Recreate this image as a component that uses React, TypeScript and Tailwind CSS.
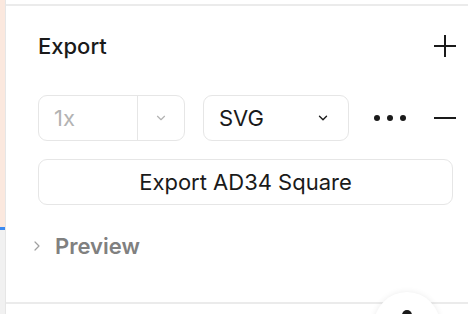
import { ChevronDown, ChevronRight } from 'lucide-react';

function PlusIcon() {
  return (
    <svg width="22" height="22" viewBox="0 0 22 22" fill="none" stroke="#1a1a1a" strokeWidth="2">
      <path d="M11 0V22M0 11H22" />
    </svg>
  );
}

function MinusIcon() {
  return (
    <svg width="22" height="22" viewBox="0 0 22 22" fill="none" stroke="#1a1a1a" strokeWidth="2">
      <path d="M0 11H22" />
    </svg>
  );
}

export default function App() {
  return (
    <div className="relative flex h-[314px] w-[468px] overflow-hidden bg-white font-['Inter',sans-serif] text-[#1a1a1a]">
      {/* left canvas edge */}
      <div className="flex w-[5px] shrink-0 flex-col">
        <div className="h-[227px] bg-[#fbe8de]" />
        <div className="h-[3px] bg-[#3d8af0]" />
        <div className="flex-1 bg-[#f1f1f1]" />
      </div>

      <div className="flex min-w-0 flex-1 flex-col border-l border-[#e6e6e6] pt-[4px]">
        <div className="flex flex-col border-t-2 border-[#ebebeb] pl-[32px] pr-[12px]">
          {/* header */}
          <div className="flex h-[80px] items-center justify-between">
            <span className="text-[22px] font-medium leading-none">Export</span>
            <PlusIcon />
          </div>

          {/* settings row */}
          <div className="mt-[9px] flex h-[46px] items-center">
            <div className="flex h-full w-[147px] shrink-0 rounded-[9px] border border-[#e6e6e6]">
              <div className="flex flex-1 items-center border-r border-[#e6e6e6] pl-[15px] text-[22px] text-[#b3b3b3]">
                1x
              </div>
              <div className="flex w-[46px] items-center justify-center text-[#b3b3b3]">
                <ChevronDown size={14} strokeWidth={2} />
              </div>
            </div>
            <div className="ml-[18px] flex h-full w-[146px] shrink-0 items-center justify-between rounded-[9px] border border-[#e6e6e6] pl-[15px] pr-[18px] text-[22px]">
              <span>SVG</span>
              <ChevronDown size={14} strokeWidth={2.4} />
            </div>
            <div className="ml-[25px] flex items-center gap-[7px]">
              <span className="h-[6px] w-[6px] rounded-full bg-[#1a1a1a]" />
              <span className="h-[6px] w-[6px] rounded-full bg-[#1a1a1a]" />
              <span className="h-[6px] w-[6px] rounded-full bg-[#1a1a1a]" />
            </div>
            <div className="ml-[28px]">
              <MinusIcon />
            </div>
          </div>

          {/* export button */}
          <button className="mt-[18px] flex h-[46px] w-[415px] items-center justify-center rounded-[9px] border border-[#e6e6e6] text-[22px]">
            Export AD34 Square
          </button>

          {/* preview */}
          <div className="-ml-[9px] mt-[29px] flex h-[24px] items-center text-[#808080]">
            <ChevronRight size={16} strokeWidth={1.8} className="text-[#a0a0a0]" />
            <span className="ml-[10px] text-[22px] font-semibold">Preview</span>
          </div>
        </div>

        <div className="mt-[44px] border-t-2 border-[#ebebeb]" />
      </div>

      {/* floating button */}
      <div className="absolute left-[374px] top-[292px] flex h-[66px] w-[66px] justify-center rounded-full bg-white pt-[18px] shadow-[0_0_6px_rgba(0,0,0,0.08)]">
        <div className="h-[10px] w-[10px] rounded-full bg-[#1a1a1a]" />
      </div>
    </div>
  );
}
